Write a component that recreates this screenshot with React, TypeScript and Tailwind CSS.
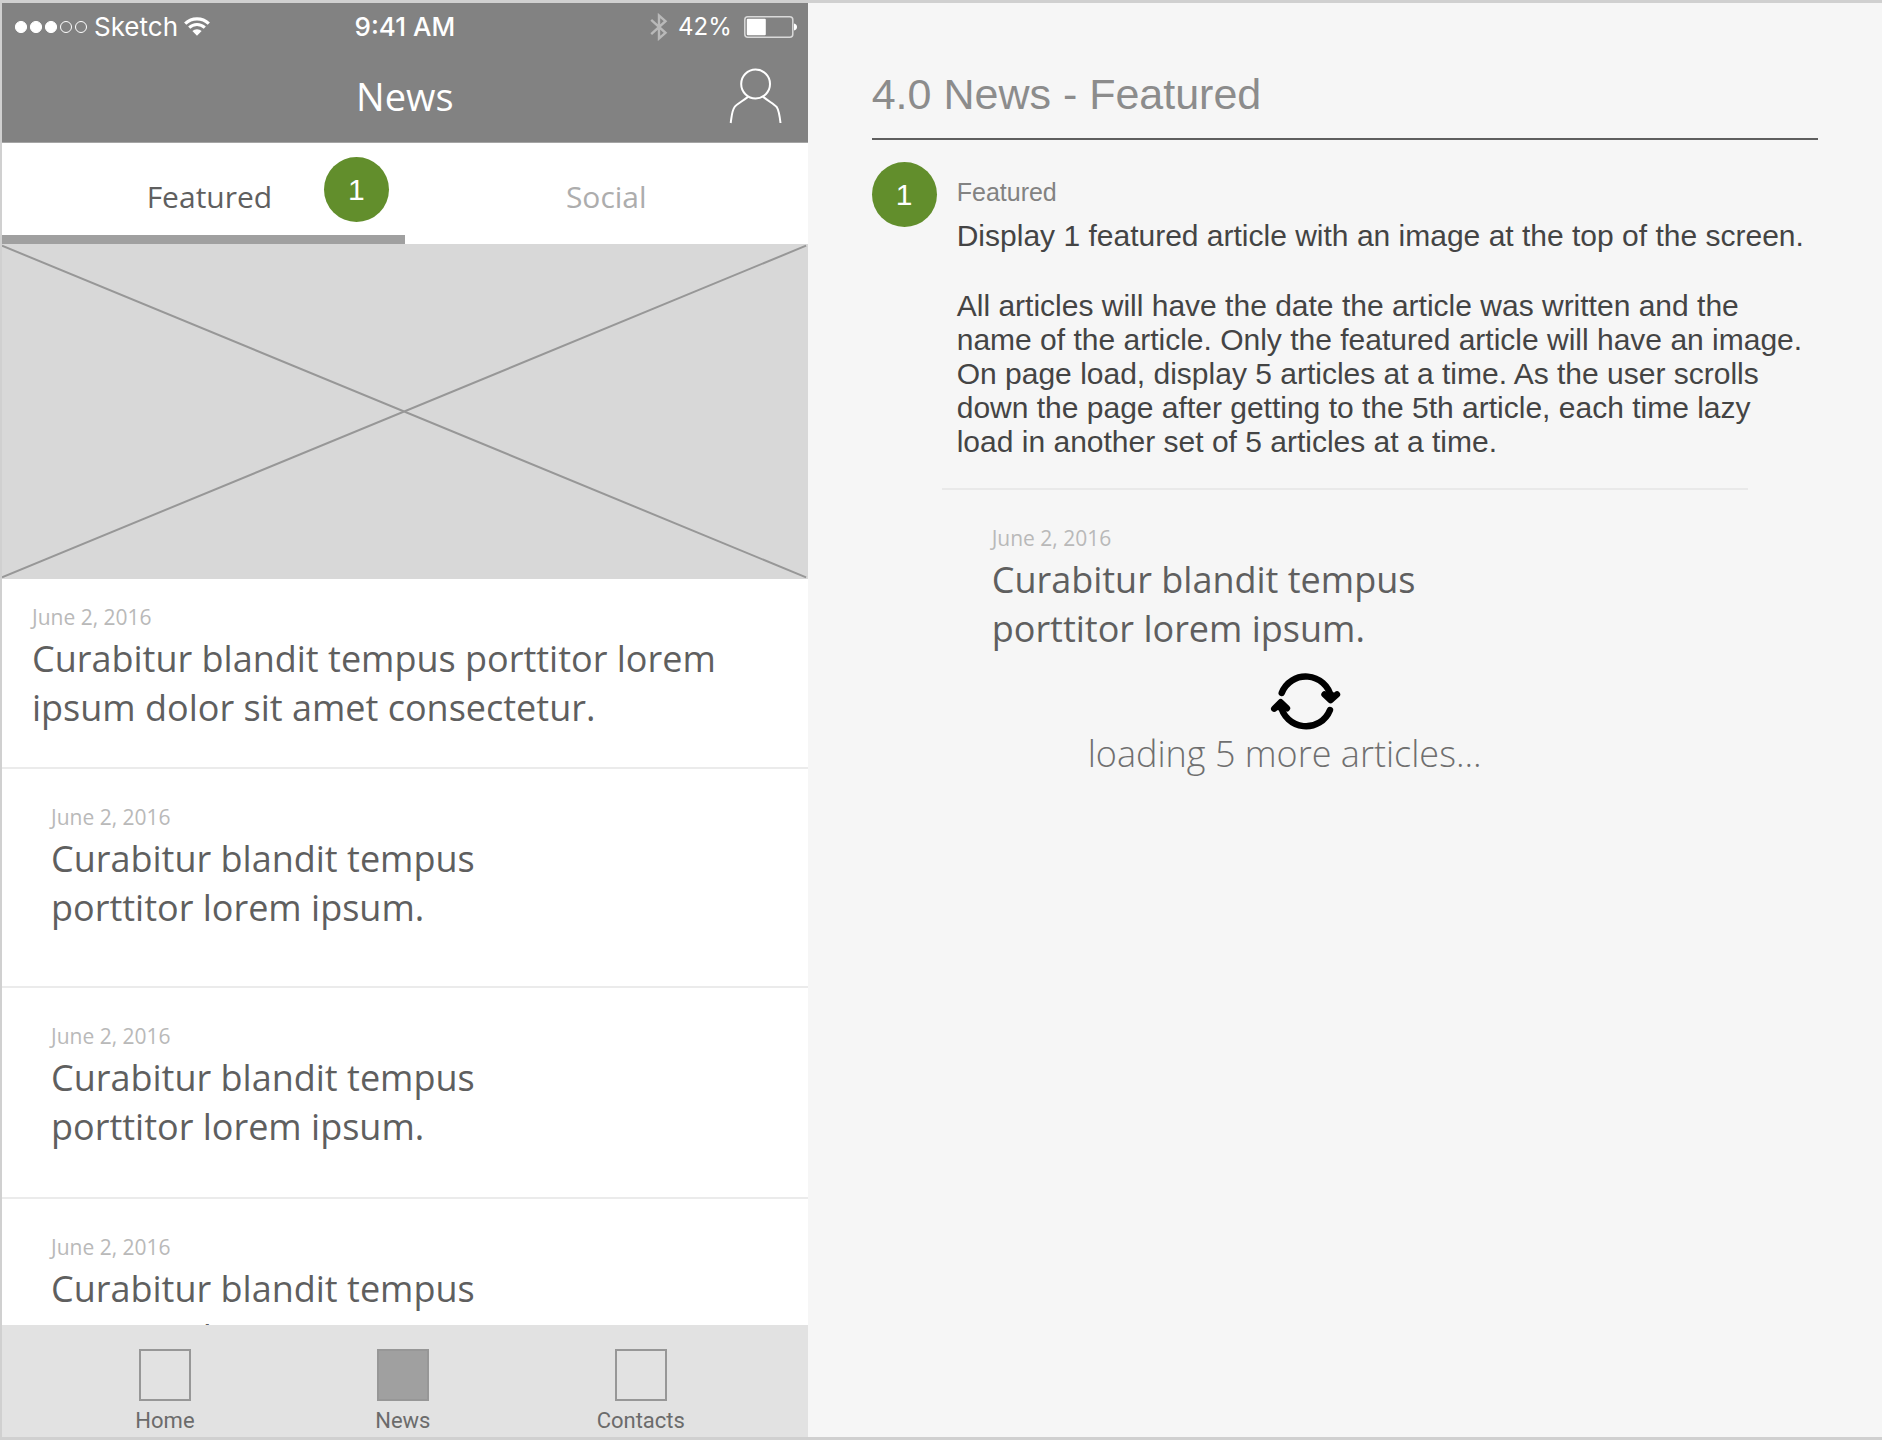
import { useState } from "react";

const ARTICLES = [
  {
    id: 1,
    date: "June 2, 2016",
    title: "Curabitur blandit tempus porttitor lorem ipsum dolor sit amet consectetur.",
    className: "pl-[30px] pr-8 pt-[22px] pb-[35px]",
  },
  {
    id: 2,
    date: "June 2, 2016",
    title: "Curabitur blandit tempus porttitor lorem ipsum.",
    className: "pl-[49px] pr-[260px] pt-8 pb-[54px]",
  },
  {
    id: 3,
    date: "June 2, 2016",
    title: "Curabitur blandit tempus porttitor lorem ipsum.",
    className: "pl-[49px] pr-[260px] pt-8 pb-[46px]",
  },
  {
    id: 4,
    date: "June 2, 2016",
    title: "Curabitur blandit tempus porttitor lorem ipsum.",
    className: "pl-[49px] pr-[260px] pt-8 pb-[46px]",
  },
];

const NAV_ITEMS = ["Home", "News", "Contacts"];

const Badge = ({ className = "" }: { className?: string }) => (
  <span
    className={`flex size-[65px] shrink-0 items-center justify-center rounded-full bg-[#628e2c] font-['Liberation_Sans',sans-serif] text-[30px] leading-none text-white ${className}`}
  >
    1
  </span>
);

const ArticleText = ({ date, title }: { date: string; title: string }) => (
  <>
    <time className="block text-[21px] leading-[33px] text-[#b9b9b9]">{date}</time>
    <h2 className="text-[36px] leading-[49px] text-[#5f5f5f]">{title}</h2>
  </>
);

const StatusBar = () => (
  <div className="relative flex h-[46px] items-center justify-between pt-0.5 pr-2.5 pl-3 font-[Inter,sans-serif] text-[26px] leading-none text-white">
    <div className="flex items-center">
      <svg width="74" height="14" viewBox="0 0 74 14" fill="white" stroke="white">
        <circle cx="7" cy="7" r="5.6" />
        <circle cx="22" cy="7" r="5.6" />
        <circle cx="37" cy="7" r="5.6" />
        <circle cx="52" cy="7" r="5.5" fill="none" />
        <circle cx="67" cy="7" r="5.5" fill="none" />
      </svg>
      <span className="ml-1.5">Sketch</span>
      <svg className="ml-1.5" width="26" height="20" viewBox="0 0 26 20" fill="none" stroke="white">
        <path d="M1.2 6.6A17 17 0 0 1 24.8 6.6" strokeWidth="3.2" />
        <path d="M5.2 10.6A11.2 11.2 0 0 1 20.8 10.6" strokeWidth="3" />
        <path d="M8.4 14A6.6 6.6 0 0 1 17.6 14L13 18.8Z" fill="white" stroke="none" />
      </svg>
    </div>
    <span className="absolute inset-x-0 text-center font-medium">9:41 AM</span>
    <div className="flex items-center">
      <svg width="18" height="28" viewBox="0 0 18 28" fill="none" stroke="#b9b9b9" strokeWidth="2.4">
        <path d="M1.2 6.8 15.5 19.8 9 25.5V2.5L15.5 8.2 1.2 21.2" />
      </svg>
      <span className="ml-2.5 text-[24px]">42%</span>
      <svg className="ml-3" width="54" height="22" viewBox="0 0 54 22">
        <rect x="0.8" y="0.8" width="48" height="20.4" rx="3" fill="none" stroke="#d9d9d9" strokeWidth="1.5" />
        <rect x="2.8" y="2.8" width="19" height="16.4" rx="1" fill="white" />
        <path d="M50 7.5C54 8 54 14 50 14.5Z" fill="white" />
      </svg>
    </div>
  </div>
);

const RefreshIcon = () => (
  <svg
    width="72"
    height="60"
    viewBox="0 0 72 60"
    fill="none"
    stroke="black"
    strokeWidth="6.4"
    strokeLinecap="round"
    strokeLinejoin="round"
  >
    <path d="M11.7 22A25.8 25.8 0 0 1 61 26" />
    <path d="M54.5 23.5 60.6 29.2 67 23.3M58 24.5H63" />
    <path d="M60 39A25.8 25.8 0 0 1 10.6 34" />
    <path d="M4.2 37.7 10.7 31.2 17 37.3M8.5 36H13" />
  </svg>
);

const Phone = () => {
  const [currentTab, setCurrentTab] = useState("Featured");
  const [currentNav, setCurrentNav] = useState("News");

  return (
    <section className="flex h-full min-h-0 flex-col bg-white font-['Open_Sans',sans-serif]">
      <header className="h-[140px] shrink-0 border-b border-[#a5a5a5] bg-[#828282] text-white">
        <StatusBar />
        <div className="relative flex h-[94px] items-center justify-center">
          <h1 className="text-[38px] leading-[48px]">News</h1>
          <button aria-label="Profile" className="absolute top-[18px] right-6">
            <svg width="56" height="58" viewBox="0 0 56 58" fill="none" stroke="white" strokeWidth="2">
              <circle cx="27.6" cy="17" r="14.4" />
              <path d="M2.7 56C4 47 4 43.5 6.6 40C9 37 14 34.5 20.3 29.6" />
              <path d="M52.5 56C51.5 47 51 43.5 48.7 40C46 37 41 34.5 34.9 29.6" />
            </svg>
          </button>
        </div>
      </header>

      <div className="grid h-[101px] shrink-0 grid-cols-2">
        <button
          onClick={() => setCurrentTab("Featured")}
          className={`relative border-b-[9px] pt-3.5 pl-3 text-[30px] ${
            currentTab === "Featured" ? "border-[#a0a0a0] text-[#5f5f5f]" : "border-white text-[#adadad]"
          }`}
        >
          Featured
          <Badge className="absolute top-3.5 right-4" />
        </button>
        <button
          onClick={() => setCurrentTab("Social")}
          className={`border-b-[9px] pt-3.5 text-[30px] ${
            currentTab === "Social" ? "border-[#a0a0a0] text-[#5f5f5f]" : "border-white text-[#adadad]"
          }`}
        >
          Social
        </button>
      </div>

      <div className="min-h-0 flex-1 overflow-hidden">
        <svg className="block h-[335px] w-full bg-[#d8d8d8]" viewBox="0 0 100 100" preserveAspectRatio="none">
          <path
            d="M0 0.5 99.8 99.5M0 99.5 99.8 0.5"
            stroke="#979797"
            strokeWidth="2"
            vectorEffect="non-scaling-stroke"
          />
        </svg>
        {ARTICLES.map((article) => (
          <article key={article.id} className={`border-b-2 border-[#ebebeb] ${article.className}`}>
            <ArticleText date={article.date} title={article.title} />
          </article>
        ))}
      </div>

      <nav className="grid h-28 shrink-0 grid-cols-3 bg-[#e2e2e2] pr-12 pl-11 font-[Roboto,sans-serif]">
        {NAV_ITEMS.map((item) => (
          <button
            key={item}
            onClick={() => setCurrentNav(item)}
            className="flex flex-col items-center gap-2 pt-6 text-[22px] leading-6 text-[#6b6b6b]"
          >
            <span
              className={`size-[52px] border-2 border-[#979797] ${currentNav === item ? "bg-[#a0a0a0]" : ""}`}
            />
            {item}
          </button>
        ))}
      </nav>
    </section>
  );
};

const Notes = () => (
  <section className="px-16 pt-[66px] font-['Liberation_Sans',sans-serif]">
    <h2 className="border-b-2 border-[#5f5f5f] pb-[19px] text-[43px] leading-[50px] text-[#8c8c8c]">
      4.0 News - Featured
    </h2>
    <div className="mt-[22px] flex gap-5">
      <Badge />
      <div className="pt-[15px] pr-2 text-[30px] leading-[34px] text-[#444]">
        <h3 className="pb-3 text-[25px] leading-[30px] text-[#828282]">Featured</h3>
        <p>Display 1 featured article with an image at the top of the screen.</p>
        <p className="mt-9">
          All articles will have the date the article was written and the name of the article. Only the featured
          article will have an image. On page load, display 5 articles at a time. As the user scrolls down the page
          after getting to the 5th article, each time lazy load in another set of 5 articles at a time.
        </p>
      </div>
    </div>
    <div className="mx-[70px] mt-[29px] border-t-2 border-[#e9e9e9] px-[50px] pt-8 font-['Open_Sans',sans-serif]">
      <div className="max-w-[480px]">
        <ArticleText date="June 2, 2016" title="Curabitur blandit tempus porttitor lorem ipsum." />
      </div>
      <div className="ml-24 flex w-fit flex-col items-center pt-[18px]">
        <div className="pl-[42px]">
          <RefreshIcon />
        </div>
        <p className="text-[36px] leading-[46px] font-light text-[#6f6f6f]">loading 5 more articles...</p>
      </div>
    </div>
  </section>
);

const App = () => (
  <main className="grid h-screen grid-cols-[3fr_4fr] border-y-[3px] border-l-2 border-[#d0d0d0] bg-[#f6f6f6]">
    <Phone />
    <Notes />
  </main>
);

export default App;
